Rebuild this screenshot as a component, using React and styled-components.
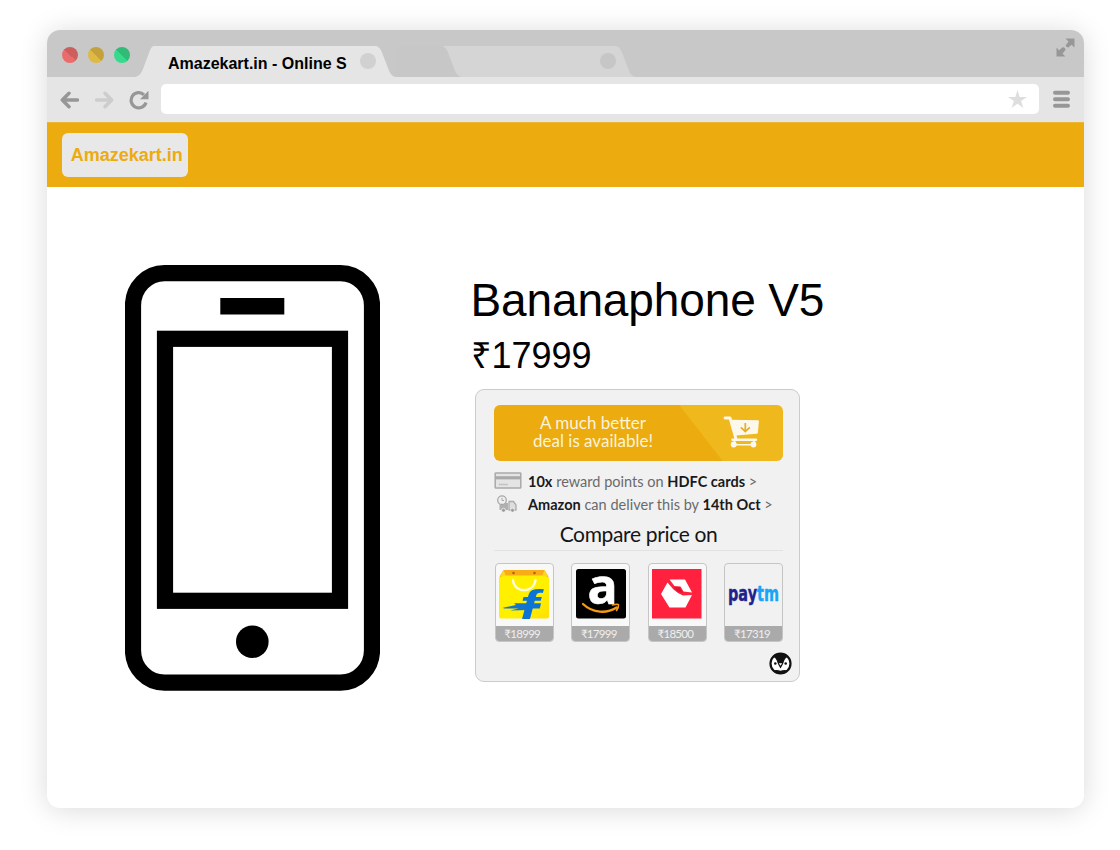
import React from 'react';
import styled, { createGlobalStyle } from 'styled-components';

const GlobalStyle = createGlobalStyle`
  * { box-sizing: border-box; }
  body { margin: 0; background: #fff; font-family: "Liberation Sans", Arial, sans-serif; color: #000; }
  svg { display: block; flex: none; }
`;

const Page = styled.div`
  height: 850px;
  padding: 30px 36px 42px 47px;
  overflow: hidden;
`;

const Window = styled.div`
  display: flex;
  flex-direction: column;
  height: 778px;
  border-radius: 13px;
  overflow: hidden;
  background: #fff;
  box-shadow: 0 2px 28px rgba(0, 0, 0, 0.15);
`;

const TabBar = styled.div`
  display: flex;
  align-items: flex-end;
  height: 46.5px;
  flex: none;
  background: #c8c8c8;
`;

const Lights = styled.div`
  display: flex;
  gap: 10px;
  padding: 0 4.7px 13.5px 15.3px;
`;

const Light = styled.span`
  width: 16px;
  height: 16px;
  border-radius: 50%;
  background: linear-gradient(45deg, ${(p) => p.$light} 50%, ${(p) => p.$dark} 50%);
`;

const Tab = styled.div`
  display: flex;
  height: 31px;
  color: ${(p) => p.$fill};
`;

const TabBody = styled.div`
  display: flex;
  justify-content: flex-end;
  width: ${(p) => p.$width}px;
  height: 31px;
  padding-top: 7.5px;
  background: ${(p) => p.$fill};
`;

const TabTitle = styled.span`
  flex: 1;
  padding-left: 14px;
  color: #000;
  font-size: 16px;
  font-weight: 700;
  line-height: 21px;
  white-space: nowrap;
`;

const TabClose = styled.span`
  width: 16px;
  height: 16px;
  border-radius: 50%;
  background: ${(p) => p.$fill};
`;

const ExpandSlot = styled.div`
  margin-left: auto;
  padding: 0 9px 19.5px 0;
`;

const Toolbar = styled.div`
  display: flex;
  align-items: center;
  height: 45.5px;
  flex: none;
  padding-left: 13px;
  background: #e5e5e5;
`;

const NavIcons = styled.div`
  display: flex;
  align-items: center;
  gap: 15.5px;
  width: 101px;
  padding-top: 0.5px;
`;

const Address = styled.div`
  display: flex;
  align-items: center;
  justify-content: flex-end;
  width: 878px;
  height: 30px;
  margin-right: 14px;
  padding-right: 12.5px;
  border-radius: 5px;
  background: #fff;
`;

const SiteHeader = styled.header`
  display: flex;
  height: 65px;
  flex: none;
  padding: 9.5px 15.2px;
  background: #ecab0f;
  border-top: 1px solid #edb634;
`;

const Logo = styled.div`
  width: 126px;
  height: 44px;
  border-radius: 6px;
  background: #e8e8e8;
  color: #ecab0f;
  font-size: 18px;
  font-weight: 700;
  line-height: 45px;
  text-align: center;
  padding-left: 3px;
`;

const Product = styled.main`
  display: flex;
  gap: 91px;
  padding: 78px 0 0 78px;
`;

const Details = styled.section`
  padding-top: 8px;
`;

const Title = styled.h1`
  margin: 0 0 0 -0.5px;
  font-size: 46px;
  font-weight: 400;
  line-height: 54px;
  letter-spacing: -0.13px;
  white-space: nowrap;
`;

const Price = styled.div`
  margin: 8px 0 0 -0.5px;
  font-size: 36px;
  line-height: 42px;
`;

const DealCard = styled.div`
  width: 325px;
  height: 293px;
  margin: 12px 0 0 4px;
  padding: 14.5px 16px 0 18px;
  border: 1.5px solid #cbcbcb;
  border-radius: 9px;
  background: #f1f1f1;
  font-family: Lato, sans-serif;
`;

const Banner = styled.div`
  display: flex;
  align-items: center;
  justify-content: space-between;
  height: 56px;
  padding: 0 23px 1px 39px;
  border-radius: 6px;
  background: linear-gradient(52.2deg, #ecab0f 68.6%, #efb81c 69%);
`;

const BannerText = styled.div`
  color: #fbf3dc;
  font-size: 17px;
  line-height: 18px;
  text-align: center;
  white-space: nowrap;
`;

const Perks = styled.div`
  display: grid;
  grid-template-columns: 34px 1fr;
  grid-template-rows: 23.5px 23.5px;
  align-items: center;
  margin-top: 9px;
`;

const Perk = styled.div`
  color: #6a6a6a;
  font-size: 14.5px;
  white-space: nowrap;
  letter-spacing: 0.015px;
  b { color: #1a1a1a; font-weight: 700; }
`;

const Compare = styled.h2`
  margin: 0;
  height: 34px;
  border-bottom: 1px solid #e2e2e2;
  color: #151515;
  font-size: 21px;
  font-weight: 400;
  line-height: 33px;
  letter-spacing: -0.35px;
  text-align: center;
`;

const Stores = styled.div`
  display: flex;
  justify-content: space-between;
  margin: 12.5px -0.5px 0 0.7px;
`;

const Store = styled.div`
  width: 59px;
  height: 79px;
  border: 1.5px solid #c5c5c5;
  border-radius: 4px;
  overflow: hidden;
  background: ${(p) => p.$fill};
`;

const StoreLogo = styled.div`
  display: flex;
  justify-content: center;
  height: 62px;
  padding-top: 4.5px;
`;

const StorePrice = styled.div`
  height: 16px;
  padding-right: 4px;
  background: #aaa;
  color: #efefef;
  font-size: 11.5px;
  letter-spacing: -0.7px;
  line-height: 16px;
  text-align: center;
`;

const CardFoot = styled.div`
  display: flex;
  justify-content: flex-end;
  padding: 9.5px 7.5px 0 0;
  margin-right: -16px;
`;

const EdgeLeft = () => (
  <svg width="19" height="31" viewBox="0 0 19 31">
    <path d="M0 31C4.500 30 6 27.500 8 23L14.500 5.500C16 2 17 0 20 0V31Z" fill="currentColor" />
  </svg>
);

const EdgeRight = ({ fill = 'currentColor' }) => (
  <svg width="20" height="31" viewBox="0 0 20 31">
    <path d="M0 0C3 .5 4.500 3 6 6.500L12.500 23.500C14 27.500 16 30.500 20 31H0Z" fill={fill} />
  </svg>
);

const ArrowIcon = ({ color, flip }) => (
  <svg width="19" height="18" viewBox="0 0 19 18">
    <path
      d="M17.500 9H3M9 2.300L2.300 9L9 15.700"
      transform={flip ? 'translate(19 0) scale(-1 1)' : undefined}
      fill="none" stroke={color} strokeWidth="3.500" strokeLinecap="round" strokeLinejoin="round"
    />
  </svg>
);

const ReloadIcon = () => (
  <svg width="20" height="20" viewBox="0 0 20 20">
    <path d="M15 4.800A7.600 7.600 0 1 0 17 12.500" fill="none" stroke="#979797" strokeWidth="3.200" />
    <path d="M19.500 0.700V9.200H11Z" fill="#979797" />
  </svg>
);

const StarIcon = () => (
  <svg width="19" height="18" viewBox="0 0 19 18">
    <path d="M9.500 0L11.700 6.900H19L13.100 11.100L15.400 18L9.500 13.700L3.600 18L5.900 11.100L0 6.900H7.300Z" fill="#dedede" />
  </svg>
);

const MenuIcon = () => (
  <svg width="17" height="18" viewBox="0 0 17 18">
    <path d="M2 2.800H15M2 9.300H15M2 15.800H15" stroke="#979797" strokeWidth="4" strokeLinecap="round" />
  </svg>
);

const ExpandIcon = () => (
  <svg width="19" height="19" viewBox="0 0 19 19">
    <path d="M9.500 0.500H18.500V9.500L15.600 6.800L12.300 9.600Q10.500 9.700 9.600 7.600L12.500 3.600Z" fill="#979797" />
    <path d="M0.500 9.800L3.200 12.200L6.500 9.200Q9.400 9 9.500 12L6.500 15.500L9.300 18.600H0.500Z" fill="#979797" />
  </svg>
);

const PhoneDrawing = () => (
  <svg width="255" height="426" viewBox="0 0 255 426">
    <rect x="8" y="8.200" width="239" height="409.500" rx="31.500" ry="32.500" fill="none" stroke="#000" strokeWidth="16.200" />
    <rect x="95.300" y="33" width="64" height="16.500" />
    <rect x="40" y="73.800" width="175" height="262" fill="none" stroke="#000" strokeWidth="16.200" />
    <circle cx="127.300" cy="376.700" r="16.300" />
  </svg>
);

const CartIcon = () => (
  <svg width="37" height="32" viewBox="0 0 37 32">
    <path d="M2 2H7L13 23" fill="none" stroke="#fdf8ec" strokeWidth="2.800" strokeLinecap="round" strokeLinejoin="round" />
    <path d="M8.500 3.800L35 4.200Q36 4.300 35.900 5.300L34.900 16.500Q34.800 17.700 33.600 17.800L13 19.500Z" fill="#fdf8ec" />
    <path d="M9.500 23.800H33" stroke="#fdf8ec" strokeWidth="2.400" strokeLinecap="round" />
    <path d="M10.500 23L13 28.500M32 24L29.500 28.500M10.500 28.800H31" stroke="#fdf8ec" strokeWidth="1.500" />
    <circle cx="10.700" cy="28.500" r="2.900" fill="#fdf8ec" />
    <circle cx="30.500" cy="28.500" r="2.900" fill="#fdf8ec" />
    <path d="M22.300 7V15M17.800 11.300L22.300 15.500L26.800 11.300" fill="none" stroke="#e9ae1c" strokeWidth="1.700" />
  </svg>
);

const CreditCardIcon = () => (
  <svg width="28" height="18" viewBox="0 0 28 18">
    <rect x="1.200" y="1" width="25.600" height="15" rx="0.600" fill="#e4e4e4" stroke="#a9a9a9" strokeWidth="1.500" />
    <path d="M1 5.800H27" stroke="#a9a9a9" strokeWidth="3.200" />
    <path d="M5 12.500H14" stroke="#b9b9b9" strokeWidth="1.700" strokeDasharray="1.600 .5" />
  </svg>
);

const TruckIcon = () => (
  <svg width="28" height="20" viewBox="-1.500 0 28 20">
    <path d="M4 8H12.500V15H4Z" fill="#b0b0b0" />
    <path d="M13.500 6.500H18L20.500 10V15H13.500Z" fill="#dedede" stroke="#adadad" strokeWidth="1.300" />
    <circle cx="6.500" cy="5.200" r="4.300" fill="#efefef" stroke="#a8a8a8" strokeWidth="1.300" />
    <path d="M6.500 2.800V5.500H8.500" fill="none" stroke="#a8a8a8" strokeWidth="1" />
    <circle cx="8" cy="15.300" r="2" fill="#9d9d9d" stroke="#f1f1f1" strokeWidth=".8" />
    <circle cx="17" cy="15.300" r="2" fill="#9d9d9d" stroke="#f1f1f1" strokeWidth=".8" />
  </svg>
);

const FlipkartLogo = () => (
  <svg width="50" height="50" viewBox="0 0 50 50">
    <defs>
      <linearGradient id="bag" x1="0" y1="0" x2="1" y2="1">
        <stop offset="0" stopColor="#fff000" />
        <stop offset="0.600" stopColor="#fff000" />
        <stop offset="1" stopColor="#ffe000" />
      </linearGradient>
    </defs>
    <path d="M4.500 1H45.500L49.500 8H.5Z" fill="#f9ac16" />
    <path d="M4.500 1L7 7H.5ZM45.500 1L43 7H49.500Z" fill="#ffd42a" />
    <path d="M0 8L7 6.500H43L50 8V47.500Q50 49.500 48 49.500H2Q0 49.500 0 47.500Z" fill="url(#bag)" />
    <circle cx="14.500" cy="4" r="1.300" fill="#ad6512" />
    <circle cx="35.500" cy="4" r="1.300" fill="#ad6512" />
    <path d="M14 11C15 24.500 35 24.500 36.500 11" fill="none" stroke="#fffce0" strokeWidth="2.300" strokeLinecap="round" />
    <text transform="translate(21 49.500) scale(1.400 1)" fontFamily="Liberation Sans, sans-serif" fontWeight="700" fontStyle="italic" fontSize="41" fill="#0b74d6">f</text>
    <path d="M4 38.800L17 36L15 34.300H30V39.500H5ZM11 41.500L24 38.500H30V41Z" fill="#1574cc" />
    <path d="M28 34.300H42L40.800 39.500H27Z" fill="#0b74d6" />
  </svg>
);

const AmazonLogo = () => (
  <svg width="50" height="50" viewBox="0 0 50 50">
    <rect width="50" height="49.500" rx="2.500" fill="#000" />
    <text x="11.500" y="34.500" fontFamily="Open Sans, sans-serif" fontWeight="700" fontSize="50" fill="#fff" stroke="#fff" strokeWidth=".6">a</text>
    <path d="M7 35C17 44.500 31 44.800 40.500 38.500" fill="none" stroke="#f59a13" strokeWidth="2.300" strokeLinecap="round" />
    <path d="M36.500 36Q42 34.500 42.500 35.800Q42.800 38 40.500 41.500" fill="none" stroke="#f59a13" strokeWidth="1.600" strokeLinecap="round" />
  </svg>
);

const SnapdealLogo = () => (
  <svg width="50" height="50" viewBox="0 0 50 50">
    <rect width="49.500" height="49.500" fill="#ff213d" />
    <path d="M17.500 10.500H33L40 23.500L31.500 22.500L28.500 17.500L22.500 17Z" fill="#fff" />
    <path d="M15.500 13.500L21.500 20.500L26 24L31 26.500L40 26L33.500 38.500H17.500L9 25Z" fill="#fff" />
    <path d="M21.500 18.500L27.500 18.200L31 24L25.500 22.500Z" fill="#e0142f" />
  </svg>
);

const PaytmLogo = () => (
  <svg width="56" height="50" viewBox="0 0 56 50">
    <text x="2" y="32" textLength="51" lengthAdjust="spacingAndGlyphs" fontFamily="DejaVu Sans, sans-serif" fontWeight="700" fontSize="20.500" fill="#20218c" stroke="#20218c" strokeWidth=".4">pay<tspan fill="#17a5f7" stroke="#17a5f7">tm</tspan></text>
  </svg>
);

const PenguinIcon = () => (
  <svg width="23" height="23" viewBox="0 0 23 23">
    <circle cx="11.500" cy="11.500" r="10" fill="#fff" stroke="#111" strokeWidth="2.200" />
    <path d="M4 4.500Q11.500 -1 19 4.500Q15.800 6 15 9Q14.500 11.500 11.500 16.500Q8.500 11.500 8 9Q7.200 6 4 4.500Z" fill="#111" />
    <path d="M4 18.500Q8 17.500 11.500 18.800Q15 17.500 19 18.500Q11.500 25 4 18.500Z" fill="#111" />
    <path d="M9.800 11.200H13.200L11.500 13.800Z" fill="#fff" />
    <circle cx="6.300" cy="11.500" r="1.300" fill="#111" />
    <circle cx="16.700" cy="11.500" r="1.300" fill="#111" />
  </svg>
);

const LIGHTS = [
  ['#ea6b6b', '#cd5e5e'],
  ['#dfb944', '#c4a23b'],
  ['#37d98a', '#30bb77'],
];

const STORES = [
  { name: 'Flipkart', Icon: FlipkartLogo, price: '₹18999', fill: '#f8f8f8' },
  { name: 'Amazon', Icon: AmazonLogo, price: '₹17999', fill: '#f8f8f8' },
  { name: 'Snapdeal', Icon: SnapdealLogo, price: '₹18500', fill: '#f8f8f8' },
  { name: 'Paytm', Icon: PaytmLogo, price: '₹17319', fill: '#f1f1f1' },
];

export default function App() {
  return (
    <Page>
      <GlobalStyle />
      <Window>
        <TabBar>
          <Lights>
            {LIGHTS.map(([light, dark]) => <Light key={light} $light={light} $dark={dark} />)}
          </Lights>
          <Tab $fill="#e5e5e5">
            <EdgeLeft />
            <TabBody $fill="#e5e5e5" $width={222.5}>
              <TabTitle>Amazekart.in - Online S</TabTitle>
              <TabClose $fill="#d1d1d1" />
            </TabBody>
            <EdgeRight />
          </Tab>
          <Tab $fill="#d5d5d5">
            <TabBody $fill="#c7c7c7" $width={46} />
            <svg width="20" height="31" viewBox="0 0 20 31">
              <rect width="20" height="31" fill="#d5d5d5" />
              <path d="M0 0C3 .5 4.500 3 6 6.500L12.500 23.500C14 27.500 16 30.500 20 31H0Z" fill="#c7c7c7" />
            </svg>
            <TabBody $fill="#d5d5d5" $width={153.5}>
              <TabClose $fill="#c6c6c6" />
            </TabBody>
            <EdgeRight />
          </Tab>
          <ExpandSlot><ExpandIcon /></ExpandSlot>
        </TabBar>
        <Toolbar>
          <NavIcons>
            <ArrowIcon color="#979797" />
            <ArrowIcon color="#cdcdcd" flip />
            <ReloadIcon />
          </NavIcons>
          <Address><StarIcon /></Address>
          <MenuIcon />
        </Toolbar>
        <SiteHeader><Logo>Amazekart.in</Logo></SiteHeader>
        <Product>
          <PhoneDrawing />
          <Details>
            <Title>Bananaphone V5</Title>
            <Price>₹17999</Price>
            <DealCard>
              <Banner>
                <BannerText>A much better<br />deal is available!</BannerText>
                <CartIcon />
              </Banner>
              <Perks>
                <CreditCardIcon />
                <Perk><b>10x</b> reward points on <b>HDFC cards</b> &gt;</Perk>
                <TruckIcon />
                <Perk><b>Amazon</b> can deliver this by <b>14th Oct</b> &gt;</Perk>
              </Perks>
              <Compare>Compare price on</Compare>
              <Stores>
                {STORES.map(({ name, Icon, price, fill }) => (
                  <Store key={name} $fill={fill}>
                    <StoreLogo><Icon /></StoreLogo>
                    <StorePrice>{price}</StorePrice>
                  </Store>
                ))}
              </Stores>
              <CardFoot><PenguinIcon /></CardFoot>
            </DealCard>
          </Details>
        </Product>
      </Window>
    </Page>
  );
}
